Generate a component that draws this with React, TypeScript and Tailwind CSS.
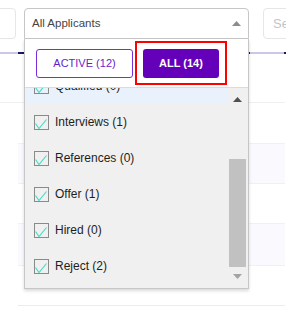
import React from "react"

const stages = [
  { label: "Qualified (0)", active: true },
  { label: "Interviews (1)" },
  { label: "References (0)" },
  { label: "Offer (1)" },
  { label: "Hired (0)" },
  { label: "Reject (2)" },
]

function Check() {
  return (
    <span className="w-[15px] h-[15px] border border-[#8a8a8a] shrink-0 flex">
      <svg width="13" height="13" viewBox="0 0 13 13" fill="none">
        <polyline points="0.5,7.5 4,12.5 11.5,3.5" stroke="#3fdcc0" strokeWidth="1.1" />
      </svg>
    </span>
  )
}

export default function App() {
  return (
    <div className="w-full h-[314px] overflow-hidden bg-white font-['Liberation_Sans',Arial,sans-serif]">
      {/* top filter bar */}
      <div className="flex pt-[8px]">
        <div className="w-[31px] -ml-[15px] h-[31px] border border-[#e6e6e6] rounded-[4px] shrink-0" />
        <div className="relative ml-[8px] z-10 shrink-0">
          <div className="w-[225px] h-[31px] border border-[#c6c6c6] rounded-t-[4px] flex items-center pl-[7px] pr-[7px] bg-white">
            <span className="text-[11.5px] text-[#444] flex-1">All Applicants</span>
            <svg width="9" height="5" viewBox="0 0 9 5">
              <polygon points="0,5 4.5,0 9,5" fill="#8c8c8c" />
            </svg>
          </div>

          {/* dropdown */}
          <div className="absolute left-0 top-full w-[225px] border-x border-b border-[#c6c6c6] bg-white shadow-[0_2px_3px_rgba(0,0,0,0.15)]">
            <div className="h-[49px] border-b border-[#dcdcdc] flex items-center pl-[11px] gap-[2px]">
              <button className="w-[97px] h-[29px] border border-[#7a2ed6] rounded-[3px] text-[11px] text-[#6a1bc8]">
                ACTIVE (12)
              </button>
              <div className="w-[92px] h-[44px] border-2 border-[#ff0000] flex items-center justify-center">
                <button className="w-[76px] h-[29px] bg-[#6400ba] rounded-[3px] text-[11px] font-bold text-white">
                  ALL (14)
                </button>
              </div>
            </div>
            <div className="flex h-[200px] bg-[#f0f0f0]">
              <div className="w-[202px] overflow-hidden">
                <div className="-mt-[20px]">
                  {stages.map((s) => (
                    <div
                      key={s.label}
                      className={`h-[36px] flex items-center pl-[9px] gap-[6px] ${s.active ? "bg-[#e8f1fc]" : ""}`}
                    >
                      <Check />
                      <span className="text-[12px] text-[#1e1e1e]">{s.label}</span>
                    </div>
                  ))}
                </div>
              </div>
              <div className="w-[20px] flex flex-col">
                <div className="h-[71px] flex justify-center pt-[9px]">
                  <svg width="9" height="5" viewBox="0 0 9 5">
                    <polygon points="0,5 4.5,0 9,5" fill="#505050" />
                  </svg>
                </div>
                <div className="h-[108px] ml-[2px] w-[17px] bg-[#c1c1c1]" />
                <div className="flex justify-center pt-[7px]">
                  <svg width="9" height="5" viewBox="0 0 9 5">
                    <polygon points="0,0 4.5,5 9,0" fill="#a3a3a3" />
                  </svg>
                </div>
              </div>
            </div>
          </div>
        </div>
        <div className="ml-[14px] w-[60px] h-[31px] border border-[#e6e6e6] rounded-[4px] shrink-0 flex items-center pl-[9px]">
          <span className="text-[13px] text-[#c4c4c4]">Search</span>
        </div>
      </div>

      {/* progress line */}
      <div className="flex h-[2px] mt-[13px]">
        <div className="w-[18px] bg-[#c9c9e6]" />
        <div className="w-[6px] bg-[#16166a]" />
        <div className="w-[224px] bg-[#c9c9e6]" />
        <div className="w-[3px] bg-[#16166a]" />
        <div className="w-[34px] bg-[#c9c9e6]" />
        <div className="w-[2px] bg-[#16166a]" />
      </div>

      {/* table rows behind */}
      <div className="mt-[48px] w-[285px] border-t border-[#efefef]">
        <div className="ml-[18px] w-[267px]">
          <div className="h-[40px]" />
          <div className="h-[41px] bg-[#f9f9fe] border-y border-[#efeff5]" />
          <div className="h-[39px]" />
          <div className="h-[43px] bg-[#f9f9fe] border-y border-[#efeff5]" />
          <div className="h-[40px] border-b border-[#ececec]" />
        </div>
      </div>
    </div>
  )
}
